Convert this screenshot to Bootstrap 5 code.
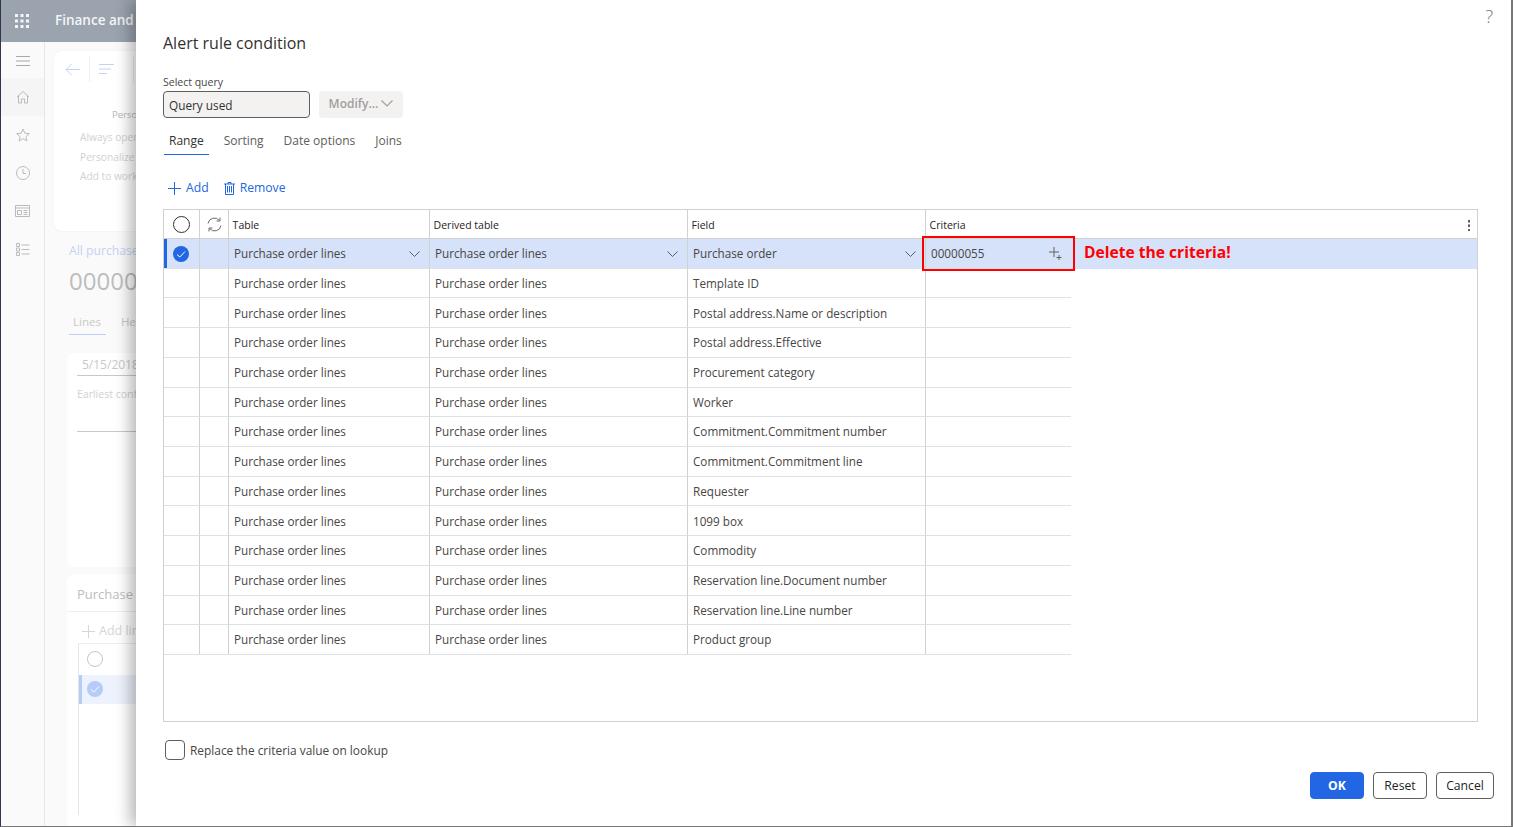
<!DOCTYPE html>
<html lang="en">
<head>
<meta charset="utf-8">
<title>Alert rule condition</title>
<link href="https://cdn.jsdelivr.net/npm/bootstrap@5.3.0/dist/css/bootstrap.min.css" rel="stylesheet">
<style>
html,body{height:100%;overflow:hidden;background:#fff}
body{font-family:"Open Sans","Noto Sans","Liberation Sans",sans-serif;font-size:12px;color:#323130}
.stage{width:1513px;height:827px;border-left:1px solid #30384e;border-right:2px solid #777;border-bottom:1px solid #777;overflow:hidden}
.backdrop{width:135px;flex:none;overflow:hidden;background:#fafafa}
.appbar{height:42px;background:#9aa3ae;color:#f4f5f7;font-weight:600;font-size:13.5px;white-space:nowrap}
.waffle{width:42px;flex:none}
.appname{margin-left:12px;margin-top:-1px}
.rail{width:44px;flex:none;border-right:1px solid #e6e6e6;height:785px;padding-top:36px;margin-left:0}
.rail-top{height:38px;margin-top:-36px;margin-bottom:-2px}
.rail-item{height:38px}
.rail-item.on{background:#f5f5f5}
.bgwork{width:91px;flex:none;overflow:hidden;white-space:nowrap;color:#c8c8c8;font-size:11px;padding-left:9px}
.bgcard1{width:120px;height:180px;margin-top:9px;background:#fff;border-radius:8px;box-shadow:0 0 3px rgba(0,0,0,.05)}
.bgtool{height:36px;padding:0 0 0 11px;gap:9px}
.bgtool .bgsep:last-child{margin-left:10px}
.bgsep{width:1px;height:26px;background:#eee}
.bgpers{padding-left:58px;margin-top:21px;font-size:9.5px;line-height:14px;color:#b8b8b8}
.bglist{padding-left:26px;margin-top:6px;line-height:19.5px;font-size:10.2px;color:#d2d2d2}
.bglink{margin:11px 0 0 15px;color:#c3d2f4;font-size:12.2px;line-height:18px}
.bignum{margin:3px 0 0 15px;font-size:24px;line-height:36px;color:#bdbdbd;font-weight:500}
.bgtabs{margin:10px 0 0 15px;width:37px;padding-left:4px;height:26px;border-bottom:1px solid #bcd0f5;font-size:11.5px;color:#c8c8c8;line-height:25px;word-spacing:17px}
.bgcard2{margin:18px 0 0 13px;height:214px;width:120px;background:#fff;border-radius:8px;padding:0 0 0 10px}
.bgline{height:1px;background:#c8c8c8;width:100%}
.bgdate{height:22px;line-height:24px;font-size:12px;padding-left:5px;color:#c8c8c8}
.bgearly{margin-top:10px;line-height:17px;font-size:10.5px;color:#d0d0d0}
.bgline2{margin-top:28px}
.bgcard3{margin:7px 0 0 13px;width:120px;height:260px;background:#fff;border-radius:8px 8px 0 0}
.bgtitle{height:38px;line-height:40px;padding-left:10px;font-size:13px;font-weight:500;color:#bdbdbd;border-bottom:1px solid #eee}
.bgadd{padding:10px 0 0 15px;color:#d6d6d6;font-size:12.5px;line-height:18px;gap:4px}
.bggrid{margin:3px 0 0 11px;height:172px;border-left:1px solid #e6e6e6;border-top:1px solid #eee}
.bgrow{height:29.5px;padding-left:8px}
.bgrow.on{background:#edf2fd;border-left:3px solid #b4ccf7;padding-left:5px;margin-top:1px}

.dialog{flex:1;min-width:0;background:#fff;padding:0 17px 0 27px;box-shadow:-6px 0 14px rgba(0,0,0,.28);z-index:2;height:826px;position:relative}
.helpmark{position:absolute;right:18px;top:4px;font-size:18px;line-height:24px;font-weight:300;color:#77757a}
.dlgtitle{font-size:16px;font-weight:500;line-height:22px;padding-top:32px;margin:0;color:#323130;box-sizing:content-box}
.sellabel{font-size:10.5px;line-height:14px;margin:21px 0 2px;display:block;color:#484644}
.queryinput{width:147px;height:27px;background:#f3f2f1;border:1px solid #605e5c;border-radius:4px;padding:3px 5px 0;font-size:11.8px;line-height:20px;color:#323130}
.modifybtn{width:84px;height:27px;background:#f3f2f1;border:0;border-radius:4px;color:#a19f9d;font-weight:600;font-size:12px;padding:0 0 2px;gap:3px;margin-left:1px}
.tabbar{margin-top:12px;height:26px;margin-left:1px}
.tabitem{font-size:12px;line-height:22px;color:#605e5c;padding:0 5px;margin-right:10px;height:25px;border-bottom:1px solid transparent}
.tabitem.on{color:#323130;border-bottom-color:#2266e3;margin-right:10px}
.actbar{margin-top:18px;height:28px;color:#2266e3;font-size:12.2px;gap:15px;padding-left:5px}
.actbtn{gap:5px;line-height:20px}
.gridwrap{width:1315px;height:513px;margin-top:7px;border:1px solid #d1d1d1;position:relative}
.qtable{table-layout:fixed;border-collapse:separate;border-spacing:0;width:1313px;margin:0;font-size:11.7px;color:#484644;--bs-table-bg:transparent}
.qtable td,.qtable th{padding:0;height:29.73px;border:0;border-bottom:1px solid #e1e1e1;border-right:1px solid #d1d1d1;vertical-align:middle;white-space:nowrap;overflow:hidden;box-shadow:none}
.qtable th{height:29px;font-size:10.5px;font-weight:500;color:#252423;padding:3px 0 0 3.6px;border-bottom-color:#d1d1d1}
.qtable th.iconcol{padding:0;text-align:center}
.qtable td.celltext{padding:1px 0 0 5px}
.qtable td.nosep{border-right:0}
.qtable td.rest,.qtable th.rest{border-right:0}
.qtable td.rest{border-bottom:0}
.qtable tr.selrow td{background:#d6e2f9;color:#484644;border-bottom:1px solid #e1e1e1}
.qtable tr.selrow td.marker{box-shadow:inset 3px 0 0 #2266e3;text-align:center;padding-right:2px}
.qtable tr.selrow td.rest{border-bottom:1px solid #d6e2f9}
.qtable th.rest{position:relative}
.cellflex{padding-right:9px}
.moredots{position:absolute;right:7px;top:9px;width:2px;height:12px;background:radial-gradient(circle,#555 1px,transparent 1.2px) 0 0/2px 4.5px repeat-y}
.redbox{position:absolute;left:758px;top:26px;width:153px;height:35px;border:2px solid #f00;pointer-events:none}
.rednote{position:absolute;left:920px;top:30px;line-height:24px;font-size:15.6px;font-weight:700;color:#f00;white-space:nowrap}
.replacerow{margin-top:18px;padding-left:2px;gap:5px;font-size:11.9px;color:#484644;line-height:18px}
.chkbox{width:20px;height:20px;border:1px solid #605e5c;border-radius:4px;background:#fff;appearance:none;margin:0;flex:none}
.dlgbtns{position:absolute;right:17px;top:772px;gap:9px}
.dlgbtn{height:27px;border-radius:4px;border:1px solid #605e5c;background:#fff;color:#201f1e;font-size:12.2px;padding:0;line-height:23px}
.dlgbtn.okbtn{background:#2266e3;border-color:#2266e3;color:#fff;font-weight:700;width:54px}
.dlgbtn.resetbtn{width:54px}
.dlgbtn.cancelbtn{width:58px}
</style>
</head>
<body>
<div class="stage d-flex">
  <div class="backdrop">
    <div class="appbar d-flex align-items-center">
      <div class="waffle d-flex justify-content-center">
        <svg width="14" height="14" viewBox="0 0 14 14" fill="#f4f5f7"><rect x="0" y="0" width="3" height="3"/><rect x="5.500" y="0" width="3" height="3"/><rect x="11" y="0" width="3" height="3"/><rect x="0" y="5.500" width="3" height="3"/><rect x="5.500" y="5.500" width="3" height="3"/><rect x="11" y="5.500" width="3" height="3"/><rect x="0" y="11" width="3" height="3"/><rect x="5.500" y="11" width="3" height="3"/><rect x="11" y="11" width="3" height="3"/></svg>
      </div>
      <span class="appname">Finance and Operations</span>
    </div>
    <div class="d-flex">
      <div class="rail">
        <div class="rail-top d-flex align-items-center justify-content-center">
          <svg width="14" height="10" viewBox="0 0 14 10" stroke="#a8a8a8" fill="none"><path d="M0 .5h14M0 5h14M0 9.500h14"/></svg>
        </div>
        <div class="rail-item on d-flex align-items-center justify-content-center">
          <svg width="14" height="14" viewBox="0 0 14 14" stroke="#bbb" fill="none"><path d="M1 7l6-5.500L13 7M2.500 6v7h3V9h3v4h3V6"/></svg>
        </div>
        <div class="rail-item d-flex align-items-center justify-content-center">
          <svg width="14" height="14" viewBox="0 0 14 14" stroke="#bbb" fill="none"><path d="M7 1l1.800 4.200 4.500.4-3.400 3 1 4.400L7 10.700 3.100 13l1-4.400-3.400-3 4.500-.4z"/></svg>
        </div>
        <div class="rail-item d-flex align-items-center justify-content-center">
          <svg width="14" height="14" viewBox="0 0 14 14" stroke="#bbb" fill="none"><circle cx="7" cy="7" r="6.500"/><path d="M7 3v4.500h3"/></svg>
        </div>
        <div class="rail-item d-flex align-items-center justify-content-center">
          <svg width="15" height="12" viewBox="0 0 15 12" stroke="#bbb" fill="none"><path d="M.5.500h14v11H.5zM.5 3h14M2.500 5.500h4v4h-4zM8.500 5.500h4M8.500 7.500h4M8.500 9.500h4"/></svg>
        </div>
        <div class="rail-item d-flex align-items-center justify-content-center">
          <svg width="14" height="13" viewBox="0 0 14 13" stroke="#bbb" fill="none"><path d="M.5.500h3v3h-3zM.5 5h3v3h-3zM.5 9.500h3v3h-3zM5.500 2h8M5.500 6.500h8M5.500 11h8"/></svg>
        </div>
      </div>
      <div class="bgwork">
        <div class="bgcard1">
          <div class="bgtool d-flex align-items-center">
            <svg width="15" height="13" viewBox="0 0 15 13" stroke="#c3d2f4" fill="none"><path d="M15 6.500H1M7 .5l-6 6 6 6"/></svg>
            <span class="bgsep"></span>
            <svg width="15" height="10" viewBox="0 0 15 10" stroke="#c3d2f4" fill="none"><path d="M0 .5h15M0 5h12M0 9.500h8"/></svg>
            <span class="bgsep"></span>
          </div>
          <div class="bgpers">Personalize</div>
          <div class="bglist">Always open<br>Personalize this<br>Add to workspace</div>
        </div>
        <div class="bglink">All purchase orders</div>
        <div class="bignum">00000055</div>
        <div class="bgtabs">Lines Header</div>
        <div class="bgcard2">
          <div class="bgdate">5/15/2018</div>
          <div class="bgline"></div>
          <div class="bgearly">Earliest confirmed</div>
          <div class="bgline bgline2"></div>
        </div>
        <div class="bgcard3">
          <div class="bgtitle">Purchase order lines</div>
          <div class="bgadd d-flex align-items-center">
            <svg width="13" height="13" viewBox="0 0 13 13" stroke="#d6d6d6" fill="none"><path d="M6.500 0v13M0 6.500h13"/></svg>Add line
          </div>
          <div class="bggrid">
            <div class="bgrow d-flex align-items-center">
              <svg width="16" height="16" viewBox="0 0 16 16" fill="none" stroke="#c4c4c4"><circle cx="8" cy="8" r="7.500"/></svg>
            </div>
            <div class="bgrow on d-flex align-items-center">
              <svg width="16" height="16" viewBox="0 0 16 16"><circle cx="8" cy="8" r="8" fill="#b4ccf7"/><path d="M4 8.500l2.800 2.500L12 5.500" stroke="#fff" fill="none"/></svg>
            </div>
          </div>
        </div>
      </div>
    </div>
  </div>

  <div class="dialog">
    <div class="helpmark">?</div>
    <h1 class="dlgtitle">Alert rule condition</h1>
    <label class="sellabel">Select query</label>
    <div class="d-flex gap-2">
      <div class="queryinput">Query used</div>
      <button type="button" class="modifybtn btn d-flex align-items-center justify-content-center">Modify...
        <svg width="12" height="7" viewBox="0 0 12 7" fill="none" stroke="#a19f9d" stroke-width="1.200"><path d="M.5.500L6 6l5.500-5.500"/></svg>
      </button>
    </div>
    <div class="tabbar d-flex">
      <div class="tabitem on">Range</div>
      <div class="tabitem">Sorting</div>
      <div class="tabitem">Date options</div>
      <div class="tabitem">Joins</div>
    </div>
    <div class="actbar d-flex align-items-center">
      <div class="actbtn d-flex align-items-center">
        <svg width="13" height="13" viewBox="0 0 13 13" stroke="#2266e3" fill="none"><path d="M6.500 0v13M0 6.500h13"/></svg>Add
      </div>
      <div class="actbtn d-flex align-items-center">
        <svg width="11" height="13" viewBox="0 0 11 13" stroke="#2266e3" fill="none"><path d="M0 2h11M4 2V.5h3V2M1.500 2v10.500h8V2M3.500 4v6.500M5.500 4v6.500M7.500 4v6.500"/></svg>Remove
      </div>
    </div>
    <div class="gridwrap">
      <table class="table qtable">
        <colgroup><col style="width:36px"><col style="width:29px"><col style="width:201px"><col style="width:258px"><col style="width:238px"><col style="width:145px"><col></colgroup>
        <thead>
          <tr>
            <th class="iconcol"><svg width="17" height="17" viewBox="0 0 17 17" fill="none" stroke="#323130"><circle cx="8.500" cy="8.500" r="8"/></svg></th>
            <th class="iconcol"><svg width="15" height="15" viewBox="0 0 15 15" fill="none" stroke="#6a6a6a"><path d="M1 6.500A6.500 6.500 0 0 1 12.500 3.500M13 .5v3.500H9.500M14 8.500A6.500 6.500 0 0 1 2.500 11.500M2 14.500V11h3.500"/></svg></th>
            <th>Table</th>
            <th>Derived table</th>
            <th>Field</th>
            <th class="rest" colspan="2">Criteria<span class="moredots"></span></th>
          </tr>
        </thead>
        <tbody>
          <tr class="selrow">
            <td class="marker"><svg width="16" height="16" viewBox="0 0 16 16"><circle cx="8" cy="8" r="8" fill="#2266e3"/><path d="M4 8.500l2.800 2.500L12 5.500" stroke="#fff" fill="none"/></svg></td>
            <td></td>
            <td class="celltext"><div class="cellflex d-flex justify-content-between align-items-center">Purchase order lines<svg width="11" height="6" viewBox="0 0 11 6" fill="none" stroke="#605e5c"><path d="M.5.500l5 5 5-5"/></svg></div></td>
            <td class="celltext"><div class="cellflex d-flex justify-content-between align-items-center">Purchase order lines<svg width="11" height="6" viewBox="0 0 11 6" fill="none" stroke="#605e5c"><path d="M.5.500l5 5 5-5"/></svg></div></td>
            <td class="celltext"><div class="cellflex d-flex justify-content-between align-items-center">Purchase order<svg width="11" height="6" viewBox="0 0 11 6" fill="none" stroke="#605e5c"><path d="M.5.500l5 5 5-5"/></svg></div></td>
            <td class="celltext nosep"><div class="cellflex d-flex justify-content-between align-items-center">00000055<svg width="13" height="13" viewBox="0 0 13 13" fill="none" stroke="#605e5c"><path d="M5 0v10M0 5h10M10 8v5M7.500 10.500h5"/></svg></div></td>
            <td class="rest"></td>
          </tr>
          <tr><td></td><td></td><td class="celltext">Purchase order lines</td><td class="celltext">Purchase order lines</td><td class="celltext">Template ID</td><td class="celltext nosep"></td><td class="rest"></td></tr>
          <tr><td></td><td></td><td class="celltext">Purchase order lines</td><td class="celltext">Purchase order lines</td><td class="celltext">Postal address.Name or description</td><td class="celltext nosep"></td><td class="rest"></td></tr>
          <tr><td></td><td></td><td class="celltext">Purchase order lines</td><td class="celltext">Purchase order lines</td><td class="celltext">Postal address.Effective</td><td class="celltext nosep"></td><td class="rest"></td></tr>
          <tr><td></td><td></td><td class="celltext">Purchase order lines</td><td class="celltext">Purchase order lines</td><td class="celltext">Procurement category</td><td class="celltext nosep"></td><td class="rest"></td></tr>
          <tr><td></td><td></td><td class="celltext">Purchase order lines</td><td class="celltext">Purchase order lines</td><td class="celltext">Worker</td><td class="celltext nosep"></td><td class="rest"></td></tr>
          <tr><td></td><td></td><td class="celltext">Purchase order lines</td><td class="celltext">Purchase order lines</td><td class="celltext">Commitment.Commitment number</td><td class="celltext nosep"></td><td class="rest"></td></tr>
          <tr><td></td><td></td><td class="celltext">Purchase order lines</td><td class="celltext">Purchase order lines</td><td class="celltext">Commitment.Commitment line</td><td class="celltext nosep"></td><td class="rest"></td></tr>
          <tr><td></td><td></td><td class="celltext">Purchase order lines</td><td class="celltext">Purchase order lines</td><td class="celltext">Requester</td><td class="celltext nosep"></td><td class="rest"></td></tr>
          <tr><td></td><td></td><td class="celltext">Purchase order lines</td><td class="celltext">Purchase order lines</td><td class="celltext">1099 box</td><td class="celltext nosep"></td><td class="rest"></td></tr>
          <tr><td></td><td></td><td class="celltext">Purchase order lines</td><td class="celltext">Purchase order lines</td><td class="celltext">Commodity</td><td class="celltext nosep"></td><td class="rest"></td></tr>
          <tr><td></td><td></td><td class="celltext">Purchase order lines</td><td class="celltext">Purchase order lines</td><td class="celltext">Reservation line.Document number</td><td class="celltext nosep"></td><td class="rest"></td></tr>
          <tr><td></td><td></td><td class="celltext">Purchase order lines</td><td class="celltext">Purchase order lines</td><td class="celltext">Reservation line.Line number</td><td class="celltext nosep"></td><td class="rest"></td></tr>
          <tr><td></td><td></td><td class="celltext">Purchase order lines</td><td class="celltext">Purchase order lines</td><td class="celltext">Product group</td><td class="celltext nosep"></td><td class="rest"></td></tr>
        </tbody>
      </table>
      <div class="redbox"></div>
      <div class="rednote">Delete the criteria!</div>
    </div>
    <div class="replacerow d-flex align-items-center">
      <input type="checkbox" class="chkbox"><span>Replace the criteria value on lookup</span>
    </div>
    <div class="dlgbtns d-flex">
      <button type="button" class="dlgbtn okbtn">OK</button>
      <button type="button" class="dlgbtn resetbtn">Reset</button>
      <button type="button" class="dlgbtn cancelbtn">Cancel</button>
    </div>
  </div>
</div>
<script src="https://cdn.jsdelivr.net/npm/bootstrap@5.3.0/dist/js/bootstrap.bundle.min.js"></script>
</body>
</html>
